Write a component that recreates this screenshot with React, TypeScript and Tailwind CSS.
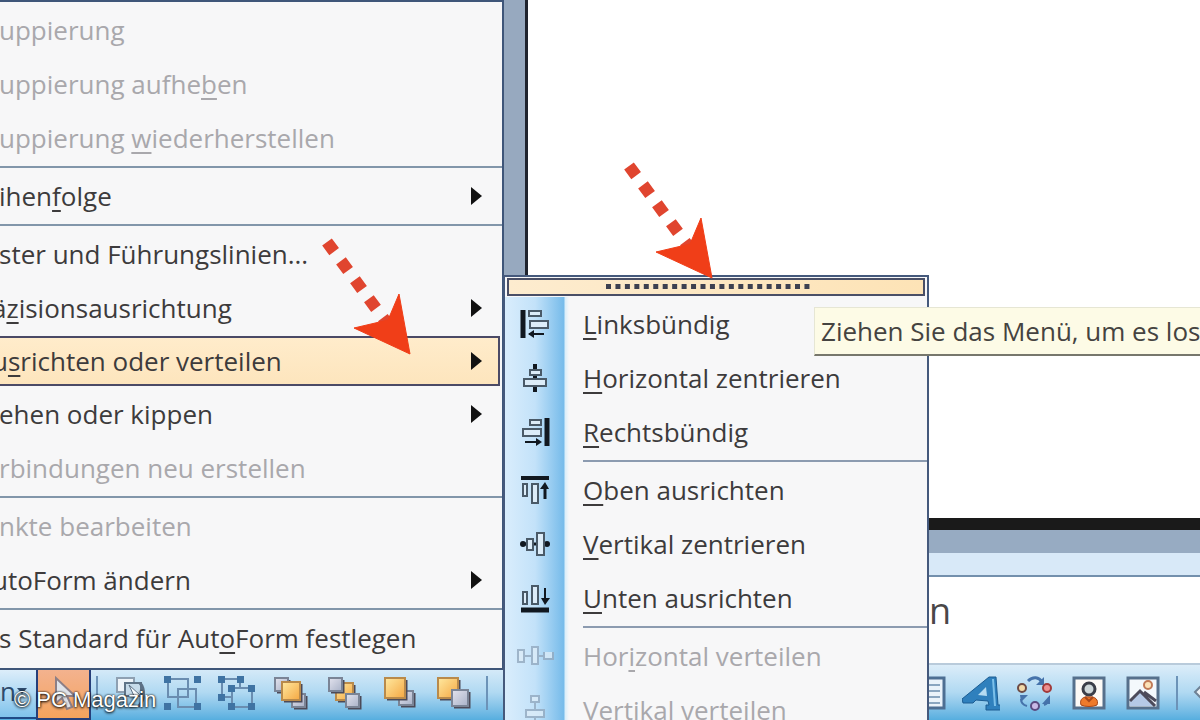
import { ReactNode } from "react";
import clsx from "clsx";

type Item = {
  label: string;
  disabled?: boolean;
  submenu?: boolean;
  active?: boolean;
  cut?: boolean;
  icon?: ReactNode;
};

// "&" marks the access key, one array per separated group
const MENU: Item[][] = [
  [
    { label: "uppierung", disabled: true },
    { label: "uppierung aufhe&ben", disabled: true },
    { label: "uppierung &wiederherstellen", disabled: true },
  ],
  [{ label: "ihen&folge", submenu: true }],
  [
    { label: "ster und Führungslinien..." },
    { label: "ä&zisionsausrichtung", submenu: true, cut: true },
    { label: "u&srichten oder verteilen", submenu: true, active: true, cut: true },
    { label: "ehen oder kippen", submenu: true },
    { label: "rbindungen neu erstellen", disabled: true },
  ],
  [
    { label: "nkte bearbeiten", disabled: true },
    { label: "utoForm ändern", submenu: true, cut: true },
  ],
  [{ label: "s Standard für Aut&oForm festlegen" }],
];

const Glyph = ({ children, faded }: { children: ReactNode; faded?: boolean }) => (
  <svg
    width="40"
    height="32"
    viewBox="0 0 40 32"
    fill="#dcecf8"
    stroke={faded ? "#93a9bf" : "#4a5a68"}
    strokeWidth="2"
    className={clsx("shrink-0", faded && "opacity-80")}
  >
    {children}
  </svg>
);

const AlignLeft = () => (
  <Glyph>
    <path d="M8 2v28" stroke="#111820" strokeWidth="5" />
    <rect x="14" y="3" width="12" height="5" />
    <rect x="15" y="13" width="18" height="7" />
    <path d="M14 26h15" stroke="#111820" />
    <path d="M13 26l6-4v8z" fill="#111820" stroke="none" />
  </Glyph>
);

const CenterH = () => (
  <Glyph>
    <path d="M20 2v28" stroke="#111820" strokeWidth="4" />
    <rect x="15" y="8" width="11" height="5" />
    <rect x="9" y="17" width="22" height="7" />
  </Glyph>
);

const AlignRight = () => (
  <Glyph>
    <path d="M32 2v28" stroke="#111820" strokeWidth="5" />
    <rect x="15" y="4" width="11" height="5" />
    <rect x="8" y="13" width="18" height="7" />
    <path d="M10 26h15" stroke="#111820" />
    <path d="M27 26l-6-4v8z" fill="#111820" stroke="none" />
  </Glyph>
);

const AlignTop = () => (
  <Glyph>
    <path d="M6 4h28" stroke="#111820" strokeWidth="4" />
    <rect x="8" y="10" width="4" height="12" />
    <rect x="17" y="10" width="6" height="19" />
    <path d="M30 11v14" stroke="#111820" strokeWidth="3" />
    <path d="M30 8l-5 7h9z" fill="#111820" stroke="none" />
  </Glyph>
);

const CenterV = () => (
  <Glyph>
    <path d="M9 16h22" stroke="#111820" strokeWidth="3" />
    <circle cx="8" cy="16" r="3" fill="#111820" stroke="none" />
    <circle cx="32" cy="16" r="3" fill="#111820" stroke="none" />
    <rect x="12" y="11" width="6" height="11" />
    <rect x="22" y="5" width="7" height="22" />
  </Glyph>
);

const AlignBottom = () => (
  <Glyph>
    <path d="M6 28h28" stroke="#111820" strokeWidth="5" />
    <rect x="8" y="10" width="4" height="12" />
    <rect x="17" y="4" width="6" height="18" />
    <path d="M30 6v13" stroke="#111820" strokeWidth="2" />
    <path d="M30 23l-4-7h9z" fill="#111820" stroke="none" />
  </Glyph>
);

const SpreadH = () => (
  <Glyph faded>
    <rect x="3" y="10" width="6" height="12" />
    <path d="M9 16h8M23 16h6" />
    <rect x="17" y="7" width="6" height="17" />
    <path d="M29 12v7h9v-7" />
  </Glyph>
);

const SpreadV = () => (
  <Glyph faded>
    <rect x="16" y="2" width="8" height="6" />
    <path d="M20 8v8" />
    <rect x="11" y="16" width="18" height="7" />
    <path d="M20 23v9" />
  </Glyph>
);

const SUBMENU: Item[][] = [
  [
    { label: "&Linksbündig", icon: <AlignLeft /> },
    { label: "&Horizontal zentrieren", icon: <CenterH /> },
    { label: "&Rechtsbündig", icon: <AlignRight /> },
  ],
  [
    { label: "&Oben ausrichten", icon: <AlignTop /> },
    { label: "&Vertikal zentrieren", icon: <CenterV /> },
    { label: "&Unten ausrichten", icon: <AlignBottom /> },
  ],
  [
    { label: "Hor&izontal verteilen", disabled: true, icon: <SpreadH /> },
    { label: "&Vertikal verteilen", disabled: true, icon: <SpreadV /> },
  ],
];

function Label({ text }: { text: string }) {
  const at = text.indexOf("&");
  if (at < 0) return <span>{text}</span>;
  return (
    <span>
      {text.slice(0, at)}
      <span className="underline decoration-2 underline-offset-4">
        {text[at + 1]}
      </span>
      {text.slice(at + 2)}
    </span>
  );
}

function MainMenu() {
  return (
    <div
      role="menu"
      className="absolute left-0 top-0 w-[504px] border-y-2 border-r-2 border-[#3f5679] bg-[#f7f7f8] pt-px pb-[3px]"
    >
      {MENU.map((group, i) => (
        <div key={i}>
          {i > 0 && <div className="my-px h-[2px] bg-[#8296aa]" />}
          {group.map((item) => (
            <button
              key={item.label}
              role="menuitem"
              disabled={item.disabled}
              className={clsx(
                "flex w-full items-center text-left whitespace-nowrap",
                item.active ? "h-[52px]" : "h-[54px]",
                item.disabled ? "text-[#a9a8ac]" : "text-[#3d3b3c]"
              )}
            >
              <span
                className={clsx(
                  "flex h-[50px] flex-1 items-center justify-between",
                  item.active
                    ? "mr-[2px] border-y-2 border-r-2 border-[#4b4a66] bg-gradient-to-b from-[#ffeccb] to-[#fde5bd] pr-[16px]"
                    : "pr-[20px]"
                )}
              >
                <span className={item.cut ? "-ml-2" : "-ml-px"}>
                  <Label text={item.label} />
                </span>
                {item.submenu && (
                  <svg width="11" height="18" viewBox="0 0 11 18" className="fill-[#111]">
                    <path d="M0 0l11 9-11 9z" />
                  </svg>
                )}
              </span>
            </button>
          ))}
        </div>
      ))}
    </div>
  );
}

function AlignMenu() {
  return (
    <div
      role="menu"
      className="absolute bottom-0 left-[503px] top-[275px] w-[426px] overflow-hidden border-2 border-b-0 border-[#45597c] bg-[#f7f7f8]"
    >
      <div className="mx-[2px] mt-px flex h-[18px] items-center justify-center border-2 border-[#4a4f66] bg-gradient-to-r from-[#fdeccf] to-[#fde3b6] pr-4">
        <svg width="204" height="5" className="mb-px">
          <path d="M0 2.5h204" stroke="#3d4050" strokeWidth="5" strokeDasharray="5 4.45" />
        </svg>
      </div>
      <div className="mt-px bg-[linear-gradient(to_right,#d9edfc_0,#c3e2f9_30px,#76bbea_59px,#d9eefa_60px,#f7f7f8_64px)]">
        {SUBMENU.map((group, i) => (
          <div key={i}>
            {i > 0 && <div className="my-px ml-[78px] h-[2px] bg-[#8c9bb0]" />}
            {group.map((item) => (
              <button
                key={item.label}
                role="menuitem"
                disabled={item.disabled}
                className={clsx(
                  "flex h-[54px] w-full items-center gap-[28px] pl-[10px] text-left whitespace-nowrap",
                  item.disabled ? "text-[#a9a8ac]" : "text-[#3d3b3c]"
                )}
              >
                {item.icon}
                <Label text={item.label} />
              </button>
            ))}
          </div>
        ))}
      </div>
    </div>
  );
}

function Tool({ label, children }: { label: string; children: ReactNode }) {
  return (
    <button aria-label={label} className="flex w-[54px] shrink-0 justify-center">
      <svg width="38" height="36" viewBox="0 0 38 36" fill="none">
        {children}
      </svg>
    </button>
  );
}

const Divider = () => <div className="h-[34px] w-[2px] shrink-0 bg-[#6c93b8]" />;

type BoxProps = { x: number; y: number; size: number; gold?: boolean };

const Box = ({ x, y, size, gold }: BoxProps) => (
  <>
    <path
      d={`M${x + 2} ${y + size + 1}h${size - 1}v${-size + 1}`}
      stroke="#4c4a58"
      strokeWidth="3"
    />
    <rect
      x={x}
      y={y}
      width={size}
      height={size}
      fill={gold ? "url(#gold)" : "url(#silver)"}
      stroke={gold ? "#b98a4b" : "#7a8496"}
      strokeWidth="2"
    />
  </>
);

function Toolbar() {
  return (
    <div className="flex h-[57px] shrink-0 items-center overflow-hidden border-t-2 border-[#b9cbdb] bg-gradient-to-b from-[#dcedf9] via-[#b0d9f2] to-[#56aedf]">
      <svg width="0" height="0" className="absolute">
        <defs>
          <linearGradient id="gold" x1="0" y1="0" x2="1" y2="1">
            <stop offset="0" stopColor="#ffe9a0" />
            <stop offset="1" stopColor="#f5a742" />
          </linearGradient>
          <linearGradient id="silver" x1="0" y1="0" x2="1" y2="1">
            <stop offset="0" stopColor="#e3e3ee" />
            <stop offset="1" stopColor="#a9b2c8" />
          </linearGradient>
        </defs>
      </svg>
      <button className="mb-px flex h-[54px] w-[36px] shrink-0 items-center justify-start border-b-2 border-[#1f4a86] bg-gradient-to-b from-[#e6f2fb] to-[#7fc3ec] text-[#2d4a6c]">
        n
        <svg width="10" height="6" className="ml-px fill-[#2d4a6c]">
          <path d="M0 0h10L5 6z" />
        </svg>
      </button>
      <button
        aria-label="Objekte markieren"
        className="flex h-full w-[55px] shrink-0 items-center justify-center border-2 border-[#263f7a] bg-gradient-to-b from-[#f3b391] to-[#f5a35c]"
      >
        <svg width="26" height="38" viewBox="0 0 26 38">
          <path
            d="M5 4v25l6-5 5 11 5-2-5-11h8z"
            fill="#dfe3ea"
            stroke="#8d7f86"
            strokeWidth="2"
          />
        </svg>
      </button>
      <div className="ml-[5px] flex items-center">
        <Divider />
        <div className="ml-1 flex items-center">
          <Tool label="Frei drehen">
            <rect x="7" y="3" width="17" height="14" fill="#eef4f9" stroke="#8ea0b2" strokeWidth="2" />
            <path d="M15 8h16v13H15z" fill="#c6dbea" stroke="#5f7488" strokeWidth="2" />
            <path d="M30 8c5 6 5 17-2 24" stroke="#5d7186" strokeWidth="3" />
            <path d="M19 10l11 10-6 1z" fill="#f5f9fc" stroke="#5d7186" />
          </Tool>
          <Tool label="Gruppierung">
            <path d="M4 4h20v18H4zM14 14h18v18H14z" stroke="#6a8db0" strokeWidth="2" />
            <path d="M0 1h7v7H0zM30 1h7v7h-7zM0 28h7v7H0zM30 28h7v7h-7z" fill="#3f73a3" />
          </Tool>
          <Tool label="Gruppierung aufheben">
            <path d="M22 13V4H4v18h9M14 13h20v19H14z" stroke="#6a8db0" strokeWidth="2" />
            <path
              d="M0 1h7v7H0zM19 1h7v7h-7zM0 19h7v7H0zM10 10h7v7h-7zM30 10h7v7h-7zM10 28h7v7h-7zM30 28h7v7h-7z"
              fill="#3f73a3"
            />
          </Tool>
          <Tool label="In den Vordergrund">
            <Box x={3} y={3} size={13} />
            <Box x={20} y={19} size={13} />
            <Box x={10} y={7} size={18} gold />
          </Tool>
          <Tool label="In den Hintergrund">
            <Box x={10} y={8} size={17} gold />
            <Box x={3} y={3} size={13} />
            <Box x={20} y={19} size={13} />
          </Tool>
          <Tool label="Eine Ebene nach vorne">
            <Box x={19} y={16} size={14} />
            <Box x={5} y={3} size={20} gold />
          </Tool>
          <Tool label="Eine Ebene nach hinten">
            <Box x={4} y={3} size={20} gold />
            <Box x={18} y={15} size={16} />
          </Tool>
        </div>
        <div className="ml-[6px] pr-[412px]">
          <Divider />
        </div>
      </div>
      <div className="flex items-center">
        <Tool label="Textfeld">
          <path d="M0 3h36v30H0z" fill="#eaf3fa" stroke="#4d6f93" strokeWidth="3" />
          <path d="M4 10h28M4 16h28M4 22h28M4 28h28" stroke="#8aa6c0" strokeWidth="2" />
        </Tool>
        <Tool label="WordArt">
          <path
            d="M0 24L27 2h7l2 28h3v5H24v-5h3l-1-4-12-1-3 3H1z"
            fill="#2f80bd"
            stroke="#1c5c92"
          />
          <path d="M16 20l8-8 1 9z" fill="#b5dbf2" />
          <path d="M31 4l2 27" stroke="#7cc0ea" strokeWidth="2" />
        </Tool>
        <Tool label="Schematische Darstellung">
          <path d="M12 6c5-5 11-4 14 1" stroke="#4673ab" strokeWidth="3" />
          <path d="M28 2v8h-8zM4 20h8l-7 7zM34 20v9h-8z" fill="#4673ab" />
          <path d="M5 24c0 4 2 6 6 7M33 22c0 4-2 7-5 8" stroke="#4673ab" strokeWidth="2" />
          <circle cx="6" cy="13" r="4" fill="#f2d9a8" stroke="#6d4a44" strokeWidth="2" />
          <circle cx="31" cy="13" r="4" fill="#ee8f8f" stroke="#a23a3a" strokeWidth="2" />
          <circle cx="19" cy="31" r="4" fill="#c9b8e6" stroke="#5a4a80" strokeWidth="2" />
        </Tool>
        <Tool label="ClipArt einfügen">
          <path d="M4 3h30v30H4z" fill="#fdfaf6" stroke="#56708c" strokeWidth="3" />
          <circle cx="19" cy="14" r="6" fill="#cfd8da" stroke="#3b3e48" strokeWidth="3" />
          <path d="M11 30c-2-6 3-9 8-8 6-1 10 3 8 8-4 2-12 2-16 0z" fill="#ef7a2b" stroke="#a9481a" />
          <path d="M15 22l4 4 4-4" stroke="#a9481a" strokeWidth="2" />
        </Tool>
        <Tool label="Grafik einfügen">
          <path d="M4 3h30v30H4z" fill="#f4f8fc" stroke="#56708c" strokeWidth="3" />
          <circle cx="24" cy="10" r="4" fill="#fce2b8" stroke="#c07a58" strokeWidth="2" />
          <path d="M6 26l10-10 15 15H6z" fill="#b5c9e6" />
          <path d="M6 26l10-10 15 15M20 17l12 9" stroke="#4c4a5a" strokeWidth="3" />
        </Tool>
        <div className="ml-[6px]">
          <Divider />
        </div>
        <Tool label="Füllfarbe">
          <path d="M9 17l9-9 11 11-9 9z" fill="#eef2f6" stroke="#6f8296" strokeWidth="2" />
        </Tool>
      </div>
    </div>
  );
}

function Arrow({ className }: { className: string }) {
  return (
    <svg
      width="100"
      height="130"
      viewBox="0 0 100 130"
      className={clsx("pointer-events-none absolute", className)}
    >
      <path
        d="M8 11L73 99"
        stroke="#e0452f"
        strokeWidth="12"
        strokeDasharray="12 11.5"
      />
      <path
        d="M35 97l34-8 11-26 11 60z"
        fill="#f03e18"
        stroke="#f03e18"
        strokeWidth="1"
        strokeLinejoin="round"
      />
    </svg>
  );
}

export default function App() {
  return (
    <main className="relative flex h-screen w-full flex-col overflow-hidden bg-white font-['Open_Sans','Noto_Sans',sans-serif] text-[26px] leading-8">
      <div className="flex flex-1 border-b-[12px] border-[#1a1a1a]">
        <div className="w-[528px] border-r-[3px] border-[#20242e] bg-[#97a9bf]" />
        <div className="flex-1 bg-white" />
      </div>
      <div className="h-[23px] shrink-0 bg-[#97abc2]" />
      <div className="h-[24px] shrink-0 border-b-2 border-[#7390ad] bg-[#d8e9f8]" />
      <div className="h-[86px] shrink-0 pl-[929px] pt-2 text-[36px] leading-[52px] text-[#4a4748]">
        n
      </div>
      <Toolbar />

      <MainMenu />
      <AlignMenu />

      <div
        role="tooltip"
        className="absolute left-[814px] right-0 top-[307px] flex h-[49px] items-center overflow-hidden border-b-2 border-l border-t border-b-[#77776c] border-l-[#e6e6d4] border-t-[#e6e6d4] bg-[#fdfbe6] pl-[6px] whitespace-nowrap text-[#454340]"
      >
        Ziehen Sie das Menü, um es los
      </div>

      <Arrow className="left-[319px] top-[231px]" />
      <Arrow className="left-[621px] top-[155px]" />

      <p className="absolute bottom-1 left-[14px] font-['Liberation_Sans',Arial,sans-serif] text-[22px] text-white [text-shadow:0_1px_3px_#000,0_0_2px_#000]">
        © PC Magazin
      </p>
    </main>
  );
}
